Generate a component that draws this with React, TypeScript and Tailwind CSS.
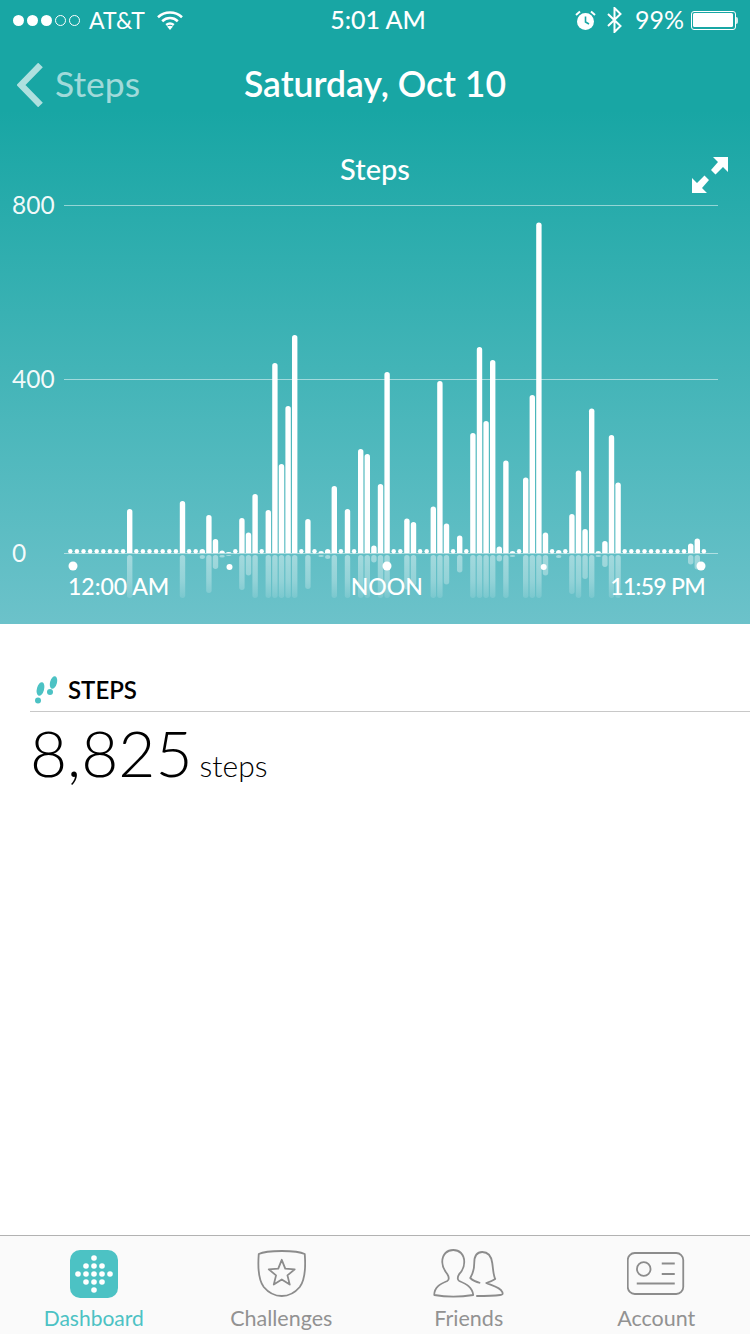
import type { ReactNode } from 'react';

// bar tops in page pixels, 0 = only the idle dot
const TOPS = [
  0, 0, 0, 0, 0, 0, 0, 0, 0, 509, 0, 0, 0, 0, 0, 0, 0, 501, 0, 0, 549, 515, 539, 550.5, 552, 0, 518, 532.5, 494, 0,
  510, 363, 464, 406, 335, 0, 519, 0, 551, 549, 486, 0, 509, 0, 449, 454, 545.5, 484, 372, 0, 0, 518.5, 522, 0, 0,
  506.5, 381, 523.5, 0, 535.5, 0, 433, 347, 421, 360, 546.5, 460.5, 551, 0, 477.5, 395, 222.5, 532.5, 0, 550, 0, 514,
  470.5, 529, 408.5, 551, 541, 435, 482.5, 0, 0, 0, 0, 0, 0, 0, 0, 0, 0, 543.5, 538.5, 0,
];

const BASE = 553;
const HALF = 2.7;

function Chart() {
  return (
    <svg className="block h-[410px] w-[686px]" viewBox="64 191 686 410">
      <defs>
        <linearGradient id="fade" gradientUnits="userSpaceOnUse" x1="0" y1="555" x2="0" y2="598">
          <stop offset="0" stopColor="#fff" stopOpacity="0.42" />
          <stop offset="0.6" stopColor="#fff" stopOpacity="0.3" />
          <stop offset="1" stopColor="#fff" stopOpacity="0.12" />
        </linearGradient>
      </defs>
      <path d="M64 205.5H718M64 379.5H718M64 553.5H718" stroke="#fff" strokeOpacity="0.5" strokeWidth="1" />
      {TOPS.map((top, i) => {
        const x = 70.3 + i * 6.6;
        if (!top) return <circle key={i} cx={x} cy={551.3} r={2.2} fill="#fff" />;
        const h = BASE - top;
        const r = Math.min(HALF, h);
        return (
          <g key={i}>
            <rect x={x - HALF} y={555} width={HALF * 2} height={Math.min(h, 43)} rx={HALF} fill="url(#fade)" />
            <path
              d={`M${x - HALF} ${BASE}V${top + r}A${HALF} ${r} 0 0 1 ${x + HALF} ${top + r}V${BASE}Z`}
              fill="#fff"
            />
          </g>
        );
      })}
      <circle cx={73} cy={566} r={4.5} fill="#fff" />
      <circle cx={229.5} cy={567} r={3} fill="#fff" />
      <circle cx={387} cy={566} r={4.5} fill="#fff" />
      <circle cx={543.7} cy={567} r={3} fill="#fff" />
      <circle cx={701} cy={566} r={4.5} fill="#fff" />
    </svg>
  );
}

function StatusBar() {
  return (
    <div className="flex h-10 items-center justify-between pl-[13px] pr-[12px] text-[23px] text-white">
      <div className="flex w-[240px] items-center">
        <div className="flex gap-[3px]">
          <span className="size-[11px] rounded-full bg-white" />
          <span className="size-[11px] rounded-full bg-white" />
          <span className="size-[11px] rounded-full bg-white" />
          <span className="size-[11px] rounded-full border border-white" />
          <span className="size-[11px] rounded-full border border-white" />
        </div>
        <span className="ml-[9px]">AT&amp;T</span>
        <svg className="ml-[12px]" width="26" height="20" viewBox="0 0 26 20" fill="none" stroke="#fff" strokeWidth="2.6">
          <path d="M1 7.2C7.8 .9 18.2 .9 25 7.2" />
          <path d="M5.2 11.2C9.8 7 16.2 7 20.8 11.2" />
          <path d="M9.2 15C11.5 13.2 14.5 13.2 16.8 15" />
          <path d="M13 20l-3-3.4c1.8-1.2 4.2-1.2 6 0z" fill="#fff" stroke="none" />
        </svg>
      </div>
      <span className="ml-[5px] text-[25px] font-medium">5:01 AM</span>
      <div className="flex w-[240px] items-center justify-end">
        <svg width="21" height="21" viewBox="0 0 21 21">
          <circle cx="10.5" cy="11.5" r="8.5" fill="#fff" />
          <path d="M10.5 6.5v5.5l3.5 2" fill="none" stroke="#18a6a4" strokeWidth="1.6" />
          <path d="M1 5l4-3.6M20 5l-4-3.6" stroke="#fff" strokeWidth="2" />
        </svg>
        <svg className="ml-[10px]" width="17" height="26" viewBox="0 0 17 26" fill="none" stroke="#fff" strokeWidth="2">
          <path d="M2 7l12.5 12L8.5 25V1l6 6L2 19" />
        </svg>
        <span className="ml-[12px] text-[25px]">99%</span>
        <div className="ml-[7px] flex items-center">
          <div className="flex h-[19px] w-[45px] rounded-[3px] border border-white p-[1.5px]">
            <div className="w-full rounded-[1.5px] bg-white" />
          </div>
          <div className="h-[7px] w-[2px] rounded-r-sm bg-white/80" />
        </div>
      </div>
    </div>
  );
}

function Tab({ label, active, children }: { label: string; active?: boolean; children: ReactNode }) {
  return (
    <div className="flex flex-1 flex-col items-center">
      <div className="flex h-[65px] items-center">{children}</div>
      <div className={active ? 'text-[21px] leading-6 text-[#4cc2c4]' : 'text-[21.5px] leading-6 text-[#929292]'}>
        {label}
      </div>
    </div>
  );
}

function FitbitIcon() {
  const dots = [
    [0, -16], [-8, -8], [0, -8], [8, -8], [-16, 0], [-8, 0], [0, 0], [8, 0], [16, 0], [-8, 8], [0, 8], [8, 8], [0, 16],
  ];
  return (
    <svg width="48" height="48" viewBox="-24 -24 48 48">
      <rect x="-24" y="-24" width="48" height="48" rx="10" fill="#4cc2c4" />
      {dots.map(([x, y], i) => (
        <circle key={i} cx={x} cy={y} r={2.8} fill="#fff" />
      ))}
    </svg>
  );
}

export default function App() {
  return (
    <div className="flex h-[1334px] w-[750px] flex-col bg-white font-['Lato',sans-serif]">
      <div className="h-[624px] bg-[linear-gradient(180deg,#18a6a4_0px,#18a6a4_110px,#6cc2ca_624px)]">
        <StatusBar />
        <div className="relative flex h-[88px] items-center justify-center">
          <div className="absolute left-[17px] top-[23px] flex items-center">
            <svg width="26" height="44" viewBox="0 0 26 44" fill="none" stroke="#fff" strokeOpacity="0.65" strokeWidth="6.5">
              <path d="M23.5 2L4 22l19.5 20" />
            </svg>
            <span className="ml-[12px] text-[35.5px] leading-[42px] pb-[2px] text-white/60">Steps</span>
          </div>
          <span className="text-[35.5px] font-semibold text-white">Saturday, Oct 10</span>
        </div>
        <div className="relative flex h-[63px] justify-center pt-[23px] text-[29px] leading-9 font-medium text-white">
          Steps
          <svg className="absolute left-[692px] top-[29px]" width="37" height="37" viewBox="0 0 37 37" fill="#fff">
            <path d="M21 0H36V15L31 10L23.5 17.5L19 13L26 5Z" />
            <path d="M0 36V21L5 26L12.5 18.5L17 23L10 31L15 36Z" />
          </svg>
        </div>
        <div className="relative flex">
          <div className="flex h-[376px] w-[64px] flex-col justify-between pl-3 text-[24.5px] leading-7 font-normal text-white/95">
            <span>800</span>
            <span>400</span>
            <span>0</span>
          </div>
          <Chart />
          <div className="absolute left-[68px] top-[381px] flex w-[637px] justify-between text-[23px] leading-7 font-medium text-white">
            <span>12:00 AM</span>
            <span className="mr-[6px]">NOON</span>
            <span className="tracking-[-0.7px]">11:59 PM</span>
          </div>
        </div>
      </div>

      <div className="flex-1 pl-[30px] pt-[52px]">
        <div className="flex h-9 items-center gap-[10px] border-b border-[#c8c8c8] pb-[8px] pl-[5px]">
          <svg width="23" height="28" viewBox="0 0 23 28" fill="#4cc2c4">
            <ellipse cx="5.5" cy="13" rx="3.6" ry="7" transform="rotate(15 5.5 13)" />
            <circle cx="3" cy="24.5" r="3" />
            <ellipse cx="18.5" cy="6.5" rx="3.4" ry="6.5" transform="rotate(15 18.5 6.5)" />
            <circle cx="15" cy="16" r="3" />
          </svg>
          <span className="text-[24px] font-semibold text-black">STEPS</span>
        </div>
        <div className="flex items-baseline pt-0 text-black">
          <span className="text-[64px] leading-[82px] font-light">8,825</span>
          <span className="ml-[7px] text-[30px] font-light">steps</span>
        </div>
      </div>

      <div className="flex h-[99px] border-t border-[#b2b2b2] bg-[#fafafa] pt-[5px]">
        <Tab label="Dashboard" active>
          <FitbitIcon />
        </Tab>
        <Tab label="Challenges">
          <svg width="50" height="47" viewBox="256.25 1251 50 47" fill="none" stroke="#8c8c8c" strokeWidth="1.8" strokeLinejoin="round">
            <path d="M282 1252C272 1252 263 1253 259 1255C258 1268 258 1280 264 1288C269 1294 276 1297 282 1297C288 1297 295 1294 300 1288C306 1280 306 1268 305 1255C301 1253 292 1252 282 1252Z" />
            <path d="M282 1260.8L285.5 1269.6L295 1270.3L287.7 1276.4L290 1285.6L282 1280.5L274 1285.6L276.3 1276.4L269 1270.3L278.5 1269.6Z" />
          </svg>
        </Tab>
        <Tab label="Friends">
          <svg width="72" height="49" viewBox="432.75 1249 72 49" fill="none" stroke="#8c8c8c" strokeWidth="1.8" strokeLinejoin="round">
            <path d="M434 1295C434 1287 440 1284 447 1281C449 1280 449 1277 447 1274C443 1269 442 1264 442 1262C442 1254 447 1250 453 1250C459 1250 464 1254 464 1262C464 1266 462 1271 459 1274C457 1277 457 1280 459 1281C466 1284 472 1287 473 1295C460 1297 446 1297 434 1295Z" />
            <path d="M480 1283C476 1282 473 1281 470 1278C473 1273 474 1268 474 1263C474 1256 477 1252 482 1252C488 1252 491 1256 492 1263C493 1270 493 1275 495 1279C492 1281 489 1282 486 1283C490 1285 500 1287 502 1292C503 1294 502 1295 500 1295C492 1296 482 1296 476 1296" />
          </svg>
        </Tab>
        <Tab label="Account">
          <svg width="58" height="44" viewBox="627.25 1252 58 44" fill="none" stroke="#8c8c8c" strokeWidth="1.8">
            <rect x="628" y="1253" width="55.5" height="41" rx="7" />
            <circle cx="644" cy="1269" r="6.8" />
            <path d="M662 1263.5H675M662 1274H675M637 1283.5H675" />
          </svg>
        </Tab>
      </div>
    </div>
  );
}
